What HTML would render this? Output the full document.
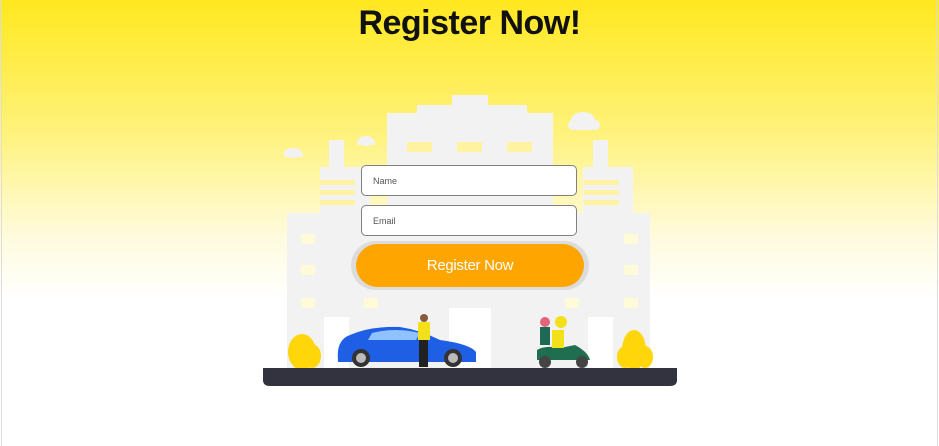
<!DOCTYPE html>
<html><head><meta charset="utf-8"><style>
html,body{margin:0;padding:0}
body{width:939px;height:446px;overflow:hidden;position:relative;font-family:"Liberation Sans",sans-serif;
background:linear-gradient(#ffe81f 0px,#fff27a 130px,#fffbe0 240px,#fff 300px);}
.edge{position:absolute;top:0;bottom:0;width:1px;background:#ddd}
h1{position:absolute;left:0;width:939px;top:1px;margin:0;text-align:center;font-size:34px;font-weight:bold;line-height:44px;color:#111;letter-spacing:-0.5px}
.in{position:absolute;left:361px;width:214px;height:29px;border:1.5px solid #808080;border-radius:5px;background:#fff;font-size:9px;color:#555;box-sizing:content-box}
.in span{position:absolute;left:11px;top:10px}
.btnw{position:absolute;left:351px;top:241px;width:238px;height:49px;border-radius:25px;background:#dcdcdc}
.btn{position:absolute;left:356px;top:244px;width:228px;height:43px;border-radius:22px;background:#ffa500;color:#fff;font-size:15px;text-align:center;line-height:43px;letter-spacing:-0.3px}
</style></head><body>
<div class="edge" style="left:1px"></div><div class="edge" style="left:937px"></div>
<svg width="939" height="446" style="position:absolute;left:0;top:0">
<g fill="#f2f2f2">
<rect x="287" y="213" width="363" height="157"/>
<rect x="320" y="167" width="50" height="60"/>
<rect x="329" y="140" width="15" height="30"/>
<rect x="583" y="167" width="50" height="60"/>
<rect x="593" y="140" width="15" height="30"/>
<rect x="387" y="113" width="166" height="120"/>
<rect x="417" y="105" width="110" height="10"/>
<rect x="452" y="95" width="36" height="12"/>
<ellipse cx="293" cy="153" rx="9" ry="5"/><rect x="284" y="153" width="19" height="4"/>
<ellipse cx="366" cy="141" rx="8" ry="5"/><rect x="357" y="141" width="18" height="4"/>
<ellipse cx="583" cy="120" rx="12" ry="8"/><rect x="568" y="120" width="32" height="10" rx="5"/>
</g>
<g fill="#fff2a0">
<rect x="407" y="142" width="25" height="10"/><rect x="457" y="142" width="25" height="10"/><rect x="507" y="142" width="25" height="10"/>
<rect x="320" y="180" width="35" height="5"/><rect x="320" y="190" width="35" height="5"/><rect x="320" y="200" width="35" height="5"/>
<rect x="584" y="180" width="35" height="5"/><rect x="584" y="190" width="35" height="5"/><rect x="584" y="200" width="35" height="5"/>
</g>
<g fill="#fffbd8">
<rect x="301" y="234" width="14" height="10"/><rect x="301" y="265" width="14" height="10"/><rect x="301" y="298" width="14" height="10"/>
<rect x="624" y="234" width="14" height="10"/><rect x="624" y="265" width="14" height="10"/><rect x="624" y="298" width="14" height="10"/>
<rect x="364" y="298" width="14" height="10"/><rect x="565" y="298" width="14" height="10"/>
</g>
<g fill="#fff"><rect x="324" y="317" width="25" height="53"/><rect x="449" y="308" width="42" height="62"/><rect x="588" y="317" width="25" height="53"/></g>
<g fill="#ffd60a">
<ellipse cx="302" cy="352" rx="14" ry="18"/><ellipse cx="312" cy="356" rx="9" ry="12"/>
<ellipse cx="634" cy="350" rx="12" ry="20"/><ellipse cx="645" cy="357" rx="8" ry="11"/><ellipse cx="625" cy="357" rx="8" ry="11"/>
</g>
<path d="M338 360 Q336 340 350 335 Q370 326 400 327 Q420 330 440 340 Q470 344 476 352 L476 362 L338 362Z" fill="#1f5fe6"/>
<path d="M372 333 Q395 327 420 333 L416 340 L368 340Z" fill="#8fc2ff"/>
<circle cx="361" cy="358" r="9" fill="#333"/><circle cx="361" cy="358" r="5" fill="#bbb"/>
<circle cx="453" cy="358" r="9" fill="#333"/><circle cx="453" cy="358" r="5" fill="#bbb"/>
<rect x="418" y="322" width="12" height="18" fill="#f3e01a"/><rect x="419" y="340" width="9" height="27" fill="#222"/><circle cx="424" cy="318" r="4" fill="#8a5a3c"/>
<path d="M537 350 Q545 345 560 348 L575 345 Q588 352 590 360 L537 360Z" fill="#1f6e50"/>
<circle cx="545" cy="362" r="6" fill="#444"/><circle cx="582" cy="362" r="6" fill="#444"/>
<rect x="540" y="327" width="10" height="18" fill="#206a55"/><circle cx="545" cy="322" r="5" fill="#e2667a"/>
<rect x="552" y="330" width="12" height="18" fill="#f3e01a"/><circle cx="561" cy="322" r="6" fill="#f3e01a"/>
<path d="M263 368 H677 V380 Q677 386 670 386 H270 Q263 386 263 380Z" fill="#33323f"/>
</svg>
<h1>Register Now!</h1>
<div class="in" style="top:165px"><span>Name</span></div>
<div class="in" style="top:205px"><span>Email</span></div>
<div class="btnw"></div><div class="btn">Register Now</div>
</body></html>
